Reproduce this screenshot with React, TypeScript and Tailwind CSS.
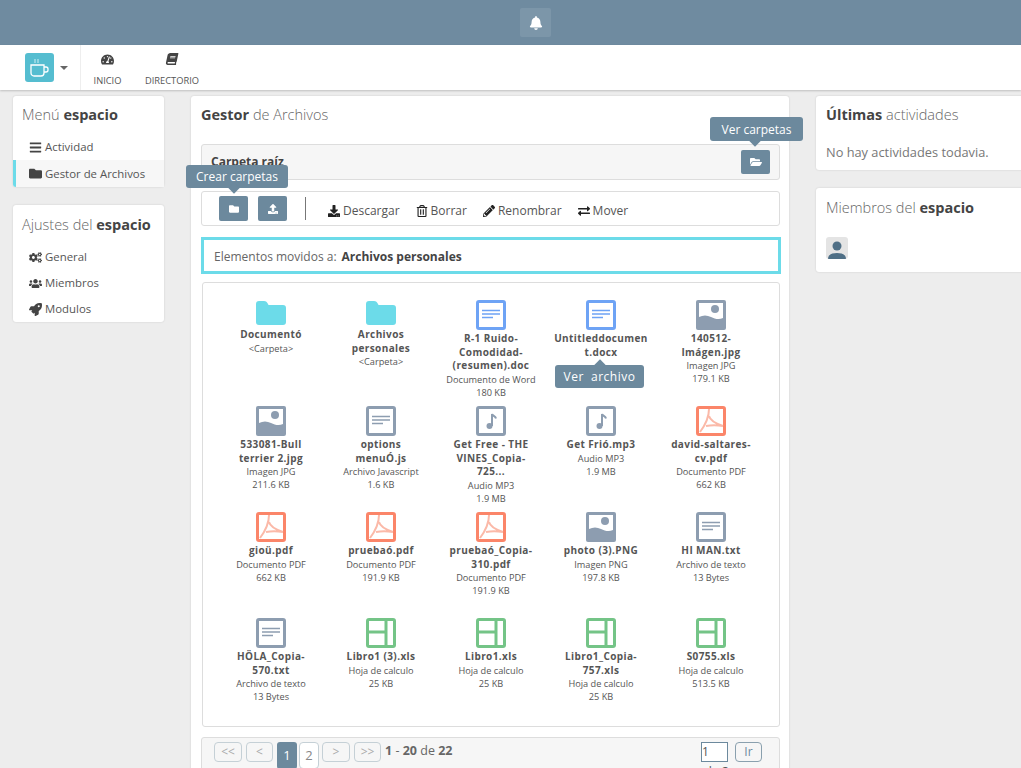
import { ReactNode } from "react";
import {
  FaBars,
  FaBell,
  FaBook,
  FaCogs,
  FaDownload,
  FaExchangeAlt,
  FaFolder,
  FaFolderOpen,
  FaPencilAlt,
  FaRegTrashAlt,
  FaRocket,
  FaTachometerAlt,
  FaUpload,
  FaUsers,
} from "react-icons/fa";

type Kind = "folder" | "doc" | "image" | "text" | "audio" | "pdf" | "sheet";

interface Item {
  name: string;
  kind: Kind;
  type?: string;
  size?: string;
}

const items: Item[] = [
  { name: "Documentó", kind: "folder", type: "<Carpeta>" },
  { name: "Archivos\npersonales", kind: "folder", type: "<Carpeta>" },
  { name: "R-1 Ruido-\nComodidad-\n(resumen).doc", kind: "doc", type: "Documento de Word", size: "180 KB" },
  { name: "Untitleddocumen\nt.docx", kind: "doc" },
  { name: "140512-\nImágen.jpg", kind: "image", type: "Imagen JPG", size: "179.1 KB" },
  { name: "533081-Bull\nterrier 2.jpg", kind: "image", type: "Imagen JPG", size: "211.6 KB" },
  { name: "options\nmenuÓ.js", kind: "text", type: "Archivo Javascript", size: "1.6 KB" },
  { name: "Get Free - THE\nVINES_Copia-\n725...", kind: "audio", type: "Audio MP3", size: "1.9 MB" },
  { name: "Get Frió.mp3", kind: "audio", type: "Audio MP3", size: "1.9 MB" },
  { name: "david-saltares-\ncv.pdf", kind: "pdf", type: "Documento PDF", size: "662 KB" },
  { name: "gioü.pdf", kind: "pdf", type: "Documento PDF", size: "662 KB" },
  { name: "pruebaó.pdf", kind: "pdf", type: "Documento PDF", size: "191.9 KB" },
  { name: "pruebaó_Copia-\n310.pdf", kind: "pdf", type: "Documento PDF", size: "191.9 KB" },
  { name: "photo (3).PNG", kind: "image", type: "Imagen PNG", size: "197.8 KB" },
  { name: "HI MAN.txt", kind: "text", type: "Archivo de texto", size: "13 Bytes" },
  { name: "HÖLA_Copia-\n570.txt", kind: "text", type: "Archivo de texto", size: "13 Bytes" },
  { name: "Libro1 (3).xls", kind: "sheet", type: "Hoja de calculo", size: "25 KB" },
  { name: "Libro1.xls", kind: "sheet", type: "Hoja de calculo", size: "25 KB" },
  { name: "Libro1_Copia-\n757.xls", kind: "sheet", type: "Hoja de calculo", size: "25 KB" },
  { name: "S0755.xls", kind: "sheet", type: "Hoja de calculo", size: "513.5 KB" },
];

function FileIcon({ kind }: { kind: Kind }) {
  if (kind === "folder") {
    return (
      <svg width="30" height="24" viewBox="0 0 30 24">
        <path d="M3 0h5c2 0 3 1 4 3l.5 1H27a3 3 0 0 1 3 3v14a3 3 0 0 1-3 3H3a3 3 0 0 1-3-3V3a3 3 0 0 1 3-3z" fill="#6cdbe9" />
      </svg>
    );
  }
  if (kind === "image") {
    return (
      <svg width="30" height="30" viewBox="0 0 30 30">
        <rect width="30" height="30" rx="2" fill="#8d9db0" />
        <path d="M3 3h24v15c-4 2-8 1-12-1s-8-2-12 0z" fill="#fff" />
        <circle cx="19" cy="9" r="4" fill="#8d9db0" />
      </svg>
    );
  }
  const color = kind === "doc" ? "#6ea3f5" : kind === "pdf" ? "#fb8569" : kind === "sheet" ? "#74c487" : "#8d9db0";
  return (
    <svg width="30" height="30" viewBox="0 0 30 30" fill="none">
      <rect x="1.500" y="1.500" width="27" height="27" rx="1.500" stroke={color} strokeWidth="3" />
      {(kind === "doc" || kind === "text") && (
        <path d="M6 10.500h18M6 14h18M6 17.500h11" stroke={color} strokeWidth="1.300" />
      )}
      {kind === "audio" && (
        <>
          <path d="M16 20V8c.5 2 3.500 2 4 4.500" stroke={color} strokeWidth="2" />
          <circle cx="13.500" cy="20" r="3" fill={color} />
        </>
      )}
      {kind === "pdf" && (
        <path d="M13 3c0 8-3 15-9 23M13 10c1 4 5 7 14 10M10 20c5-1 11-1 17 0" stroke="#fbb9a8" strokeWidth="2" />
      )}
      {kind === "sheet" && <path d="M3 14h16M20 3v24" stroke={color} strokeWidth="3" />}
    </svg>
  );
}

function Tooltip({ label, className }: { label: string; className: string }) {
  return (
    <div className={`absolute z-10 rounded-[3px] bg-[#6c899d] text-center text-white ${className}`}>
      {label}
    </div>
  );
}

function Arrow({ className }: { className: string }) {
  return <span className={`absolute z-10 size-2 rotate-45 bg-[#6c899d] ${className}`} />;
}

function SideLink({ icon, label, active }: { icon: ReactNode; label: string; active?: boolean }) {
  return (
    <div
      className={`flex items-center gap-[3px] border-l-[3px] pl-[13px] text-[11.400px] text-[#555] ${
        active ? "h-[27px] rounded-bl-[3px] border-[#6cdbe9] bg-[#f7f7f7]" : "h-[26px] border-transparent"
      }`}
    >
      <span className="flex w-[13px] justify-center text-[13px] text-[#444]">{icon}</span>
      {label}
    </div>
  );
}

function Card({ children, className = "" }: { children: ReactNode; className?: string }) {
  return <div className={`rounded-[3px] bg-white shadow-[0_0_2px_rgba(0,0,0,0.15)] ${className}`}>{children}</div>;
}

function PageBtn({ label, w }: { label: string; w: string }) {
  return (
    <span className={`flex h-[20px] items-center justify-center rounded-[4px] border border-[#c5d0d6] text-[12px] text-[#aaa] ${w}`}>
      {label}
    </span>
  );
}

function ToolAction({ icon, label }: { icon: ReactNode; label: string }) {
  return (
    <span className="flex items-center gap-[3px] text-[12px] text-[#555]">
      <span className="text-[12px] text-[#222]">{icon}</span>
      {label}
    </span>
  );
}

export default function App() {
  return (
    <div className="h-[768px] overflow-hidden bg-[#ededed] font-['Open_Sans',sans-serif]">
      <div className="flex h-[45px] items-start justify-center bg-[#6f8ba0] pt-[8px] pl-[50px]">
        <span className="flex h-[29px] w-[31px] items-center justify-center rounded-[2px] bg-[#7c96a9]">
          <FaBell size={14} color="#fff" />
        </span>
      </div>

      <div className="flex h-[45px] bg-white shadow-[0_1px_2px_rgba(0,0,0,0.2)]">
        <div className="flex w-[81px] shrink-0 items-center border-r border-[#eee] pl-[25px]">
          <span className="flex size-[29px] items-center justify-center rounded-[3px] bg-[#55bdd0]">
            <svg width="19" height="19" viewBox="0 0 19 19" fill="none">
              <path d="M1 7h13v8a3 3 0 0 1-3 3H4a3 3 0 0 1-3-3zM14 9h2a2 2 0 0 1 2 2v1a2 2 0 0 1-2 2h-2" stroke="#fff" strokeWidth="1.300" />
              <path d="M5 1v4M8 1v4" stroke="#cfeef3" />
            </svg>
          </span>
          <svg width="8" height="4" viewBox="0 0 8 4" className="ml-[6px]">
            <path d="M0 0h8L4 4z" fill="#666" />
          </svg>
        </div>
        <div className="flex w-[53px] flex-col items-center pt-[8px] text-[9.300px] text-[#555]">
          <FaTachometerAlt size={13} className="text-[#444]" />
          <span className="mt-[8px]">INICIO</span>
        </div>
        <div className="ml-[10px] flex w-[56px] flex-col items-center pt-[8px] text-[9.300px] text-[#555]">
          <FaBook size={12} className="-skew-x-12 text-[#444]" />
          <span className="mt-[9px]">DIRECTORIO</span>
        </div>
      </div>

      <div className="flex pt-[6px]">
        <div className="ml-[13px] flex w-[151px] shrink-0 flex-col gap-[18px]">
          <Card>
            <div className="h-[38px] px-[9px] pt-[8px] text-[14.500px] font-light text-[#666]">
              Menú <b className="font-bold text-[#444]">espacio</b>
            </div>
            <SideLink icon={<FaBars />} label="Actividad" />
            <SideLink icon={<FaFolder />} label="Gestor de Archivos" active />
          </Card>
          <Card>
            <div className="h-[39px] px-[9px] pt-[9px] text-[14.500px] font-light whitespace-nowrap text-[#666]">
              Ajustes del <b className="font-bold text-[#444]">espacio</b>
            </div>
            <SideLink icon={<FaCogs />} label="General" />
            <SideLink icon={<FaUsers />} label="Miembros" />
            <SideLink icon={<FaRocket />} label="Modulos" />
          </Card>
        </div>

        <Card className="relative ml-[27px] h-[700px] w-[598px] shrink-0 pr-[9px] pl-[10px]">
          <div className="h-[29px] pt-[8px] text-[14.500px] font-light text-[#666]">
            <b className="font-bold text-[#444]">Gestor</b> de Archivos
          </div>

          <div className="mt-[19px] flex h-[36px] items-center justify-between rounded-[3px] border border-[#ddd] bg-[#f6f6f6] pr-[9px] pl-[9px]">
            <b className="text-[12px] text-[#444]">Carpeta raíz</b>
            <span className="flex h-[24px] w-[29px] items-center justify-center rounded-[2px] bg-[#6c899d] text-white">
              <FaFolderOpen size={12} />
            </span>
          </div>
          <Tooltip label="Ver carpetas" className="top-[21px] left-[519px] h-[24px] w-[93px] text-[12px] leading-[25px]" />
          <Arrow className="top-[41px] left-[560px]" />

          <div className="mt-[11px] flex h-[35px] items-center rounded-[3px] border border-[#ddd] bg-white pl-[17px]">
            <span className="flex h-[25px] w-[29px] items-center justify-center rounded-[2px] bg-[#6c899d] text-white">
              <FaFolder size={10} />
            </span>
            <span className="ml-[10px] flex h-[25px] w-[29px] items-center justify-center rounded-[2px] bg-[#6c899d] text-white">
              <FaUpload size={10} />
            </span>
            <span className="mr-[22px] ml-[18px] h-[23px] w-px bg-[#777]" />
            <div className="mt-[5px] flex items-center gap-[16px]">
              <ToolAction icon={<FaDownload />} label="Descargar" />
              <ToolAction icon={<FaRegTrashAlt />} label="Borrar" />
              <ToolAction icon={<FaPencilAlt />} label="Renombrar" />
              <ToolAction icon={<FaExchangeAlt />} label="Mover" />
            </div>
          </div>
          <Tooltip label="Crear carpetas" className="top-[69px] left-[-5px] h-[23px] w-[102px] text-[12px] leading-[23px]" />
          <Arrow className="top-[88px] left-[39px]" />

          <div className="mt-[11px] mr-[-1px] flex h-[37px] items-center border-[3px] border-[#6cdbe9] pt-[3px] pl-[10px] text-[12px] text-[#666]">
            Elementos movidos a:
            <b className="ml-[5px] text-[#444]">Archivos personales</b>
          </div>

          <div className="mt-[8px] ml-[1px] h-[445px] rounded-[3px] border border-[#ddd] pt-[17px]">
            <div className="grid grid-cols-[repeat(5,110px)] pl-[13px]">
              {items.map((it) => (
                <div key={it.name} className="flex h-[106px] w-[110px] flex-col items-center text-center">
                  {it.kind === "folder" ? (
                    <div className="h-[28px] pt-[1px]">
                      <FileIcon kind={it.kind} />
                    </div>
                  ) : (
                    <div className="h-[32px]">
                      <FileIcon kind={it.kind} />
                    </div>
                  )}
                  <div className="text-[10px] leading-[13.500px] font-bold tracking-[0.4px] whitespace-pre-line text-[#555]">
                    {it.name}
                  </div>
                  {it.type && <div className="text-[9.200px] leading-[13px] text-[#555]">{it.type}</div>}
                  {it.size && <div className="text-[9.200px] leading-[13px] text-[#555]">{it.size}</div>}
                </div>
              ))}
            </div>
          </div>
          <Tooltip label="Ver  archivo" className="top-[269px] left-[364px] h-[23px] w-[89px] text-[12px] leading-[23px] tracking-[0.5px] whitespace-pre" />
          <Arrow className="top-[265px] left-[405px]" />

          <div className="mt-[10px] flex h-[40px] justify-between rounded-[3px] border border-[#ddd] bg-[#f6f6f6] pt-[4px] pl-[12px]">
            <div className="flex items-start">
              <PageBtn label="<<" w="w-[28px]" />
              <span className="ml-[4px]">
                <PageBtn label="<" w="w-[27px]" />
              </span>
              <span className="ml-[4px] flex h-[27px] w-[20px] items-center justify-center rounded-[3px] bg-[#6c899d] text-[13px] text-white">
                1
              </span>
              <span className="ml-[2px] flex h-[27px] w-[20px] items-center justify-center rounded-[4px] border border-[#c5d0d6] bg-white text-[13px] text-[#888]">
                2
              </span>
              <span className="ml-[3px]">
                <PageBtn label=">" w="w-[28px]" />
              </span>
              <span className="ml-[4px]">
                <PageBtn label=">>" w="w-[27px]" />
              </span>
              <span className="ml-[4px] text-[12.500px] leading-[18px] text-[#666]">
                <b>1</b> - <b>20</b> de <b>22</b>
              </span>
            </div>
            <div className="mr-[17px] flex flex-col items-center">
              <div className="flex gap-[7px]">
                <span className="h-[20px] w-[27px] border border-[#6c899d] bg-white text-[12px] leading-[18px] text-[#555]">1</span>
                <span className="flex h-[20px] w-[27px] items-center justify-center rounded-[4px] border border-[#8aa0ae] text-[12px] text-[#6c899d]">
                  Ir
                </span>
              </div>
              <span className="mt-[1px] mr-[30px] text-[12px] text-[#555]">
                de <b>2</b>
              </span>
            </div>
          </div>
        </Card>

        <div className="ml-[27px] flex w-[230px] shrink-0 flex-col gap-[18px]">
          <Card className="h-[74px] px-[10px] pt-[8px]">
            <div className="text-[14.500px] font-light text-[#666]">
              <b className="font-bold text-[#444]">Últimas</b> actividades
            </div>
            <div className="mt-[17px] text-[12.800px] text-[#777]">No hay actividades todavia.</div>
          </Card>
          <Card className="h-[84px] px-[10px] pt-[9px]">
            <div className="text-[14.500px] font-light text-[#666]">
              Miembros del <b className="font-bold text-[#444]">espacio</b>
            </div>
            <div className="mt-[18px] flex size-[22px] items-end justify-center overflow-hidden rounded-[3px] bg-[#e4e4e4]">
              <svg width="20" height="19" viewBox="0 0 20 19">
                <circle cx="10" cy="6" r="4.500" fill="#4f6f86" />
                <path d="M1 19c0-5 5-6 9-6s9 1 9 6z" fill="#4f6f86" />
              </svg>
            </div>
          </Card>
        </div>
      </div>
    </div>
  );
}
